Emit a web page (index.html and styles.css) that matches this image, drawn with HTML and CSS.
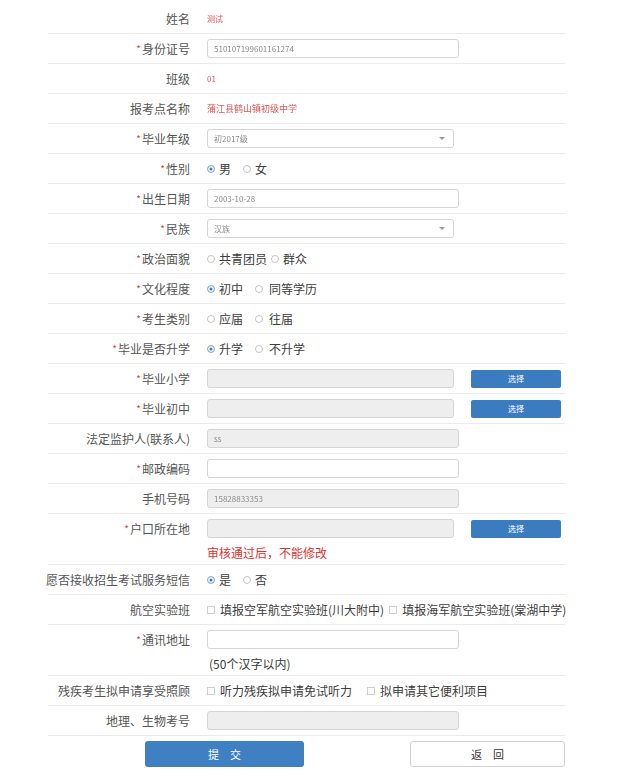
FILE: index.html
```html
<!DOCTYPE html>
<html lang="zh-CN">
<head>
<meta charset="utf-8">
<title>考生信息</title>
<link rel="stylesheet" href="styles.css">
</head>
<body>
<div class="form">
  <div class="row">
    <div class="label">姓名</div>
    <div class="field"><span class="val red blur">测试</span></div>
  </div>
  <div class="row">
    <div class="label"><span class="req">*</span>身份证号</div>
    <div class="field"><div class="input"><span class="blur">510107199601161274</span></div></div>
  </div>
  <div class="row">
    <div class="label">班级</div>
    <div class="field"><span class="val red blur">01</span></div>
  </div>
  <div class="row">
    <div class="label">报考点名称</div>
    <div class="field"><span class="val red blur wide">蒲江县鹤山镇初级中学</span></div>
  </div>
  <div class="row">
    <div class="label"><span class="req">*</span>毕业年级</div>
    <div class="field"><div class="input select"><span class="blur">初2017级</span><span class="caret"></span></div></div>
  </div>
  <div class="row">
    <div class="label"><span class="req">*</span>性别</div>
    <div class="field">
      <span class="opt"><span class="radio on"></span>男</span>
      <span class="opt"><span class="radio"></span>女</span>
    </div>
  </div>
  <div class="row">
    <div class="label"><span class="req">*</span>出生日期</div>
    <div class="field"><div class="input"><span class="blur">2003-10-28</span></div></div>
  </div>
  <div class="row">
    <div class="label"><span class="req">*</span>民族</div>
    <div class="field"><div class="input select"><span class="blur">汉族</span><span class="caret"></span></div></div>
  </div>
  <div class="row">
    <div class="label"><span class="req">*</span>政治面貌</div>
    <div class="field">
      <span class="opt tight"><span class="radio"></span>共青团员</span>
      <span class="opt"><span class="radio"></span>群众</span>
    </div>
  </div>
  <div class="row">
    <div class="label"><span class="req">*</span>文化程度</div>
    <div class="field">
      <span class="opt"><span class="radio on"></span>初中</span>
      <span class="opt"><span class="radio sp"></span>同等学历</span>
    </div>
  </div>
  <div class="row">
    <div class="label"><span class="req">*</span>考生类别</div>
    <div class="field">
      <span class="opt"><span class="radio"></span>应届</span>
      <span class="opt"><span class="radio sp"></span>往届</span>
    </div>
  </div>
  <div class="row">
    <div class="label"><span class="req">*</span>毕业是否升学</div>
    <div class="field">
      <span class="opt"><span class="radio on"></span>升学</span>
      <span class="opt"><span class="radio sp"></span>不升学</span>
    </div>
  </div>
  <div class="row">
    <div class="label"><span class="req">*</span>毕业小学</div>
    <div class="field"><div class="input dis short"></div><button class="btn-select" type="button">选择</button></div>
  </div>
  <div class="row">
    <div class="label"><span class="req">*</span>毕业初中</div>
    <div class="field"><div class="input dis short"></div><button class="btn-select" type="button">选择</button></div>
  </div>
  <div class="row">
    <div class="label">法定监护人(联系人)</div>
    <div class="field"><div class="input dis"><span class="blur">ss</span></div></div>
  </div>
  <div class="row">
    <div class="label"><span class="req">*</span>邮政编码</div>
    <div class="field"><div class="input"></div></div>
  </div>
  <div class="row">
    <div class="label">手机号码</div>
    <div class="field"><div class="input dis"><span class="blur">15828833353</span></div></div>
  </div>
  <div class="row">
    <div class="label"><span class="req">*</span>户口所在地</div>
    <div class="cell">
      <div class="field"><div class="input dis short"></div><button class="btn-select" type="button">选择</button></div>
      <div class="note red-note">审核通过后，不能修改</div>
    </div>
  </div>
  <div class="row">
    <div class="label">愿否接收招生考试服务短信</div>
    <div class="field">
      <span class="opt"><span class="radio on"></span>是</span>
      <span class="opt"><span class="radio"></span>否</span>
    </div>
  </div>
  <div class="row">
    <div class="label">航空实验班</div>
    <div class="field">
      <span class="opt chk-opt"><span class="check"></span>填报空军航空实验班(川大附中)</span>
      <span class="opt chk-opt"><span class="check"></span>填报海军航空实验班(棠湖中学)</span>
    </div>
  </div>
  <div class="row">
    <div class="label"><span class="req">*</span>通讯地址</div>
    <div class="cell">
      <div class="field"><div class="input"></div></div>
      <div class="note hint">(50个汉字以内)</div>
    </div>
  </div>
  <div class="row">
    <div class="label">残疾考生拟申请享受照顾</div>
    <div class="field">
      <span class="opt chk-opt wide-gap"><span class="check"></span>听力残疾拟申请免试听力</span>
      <span class="opt chk-opt"><span class="check"></span>拟申请其它便利项目</span>
    </div>
  </div>
  <div class="row">
    <div class="label">地理、生物考号</div>
    <div class="field"><div class="input dis"></div></div>
  </div>
  <div class="actions">
    <button class="btn submit" type="button">提　交</button>
    <button class="btn back" type="button">返　回</button>
  </div>
</div>
</body>
</html>
```

FILE: styles.css
```css
body {
  margin: 0;
  background: #fff;
  font-family: "Noto Sans CJK SC", "Noto Sans", "Liberation Sans", sans-serif;
}

.form {
  width: 517px;
  margin-left: 48px;
  padding-top: 4px;
}

.row {
  display: grid;
  grid-template-columns: 152px 1fr;
  border-bottom: 1px solid #ebebeb;
}

.label {
  height: 29px;
  display: flex;
  align-items: center;
  justify-content: flex-end;
  padding-right: 10px;
  font-size: 12px;
  color: #555;
  white-space: nowrap;
}

.req {
  color: #e04040;
  font-size: 10px;
  margin-right: 1px;
  align-self: flex-start;
  margin-top: 7px;
}

.field {
  height: 29px;
  display: flex;
  align-items: center;
  padding-left: 7px;
  font-size: 12px;
  color: #3c3c3c;
  white-space: nowrap;
}

.cell {
  display: flex;
  flex-direction: column;
}

.note {
  height: 21px;
  line-height: 19px;
  padding-left: 7px;
  font-size: 12px;
}

.red-note {
  color: #e0332f;
}

.hint {
  color: #3c3c3c;
  padding-left: 9px;
}

.val {
  font-size: 8px;
}

.val.wide {
  font-size: 9px;
}

.red {
  color: #e35252;
}

.blur {
  filter: blur(0.7px);
}

.input {
  box-sizing: border-box;
  width: 252px;
  height: 19px;
  border: 1px solid #d5d5d5;
  border-radius: 3px;
  background: #fff;
  display: flex;
  align-items: center;
  padding-left: 6px;
  font-size: 8px;
  color: #8a8a8a;
}

.input.short,
.input.select {
  width: 247px;
}

.input.dis {
  background: #eeeeee;
}

.select {
  justify-content: space-between;
  padding-right: 8px;
}

.caret {
  width: 0;
  height: 0;
  border-left: 3px solid transparent;
  border-right: 3px solid transparent;
  border-top: 3px solid #999;
}

.btn-select {
  margin-left: 17px;
  width: 90px;
  height: 18px;
  border: none;
  border-radius: 2px;
  background: #3b7cc0;
  color: #fff;
  font-family: inherit;
  font-size: 8px;
  padding: 0;
}

.opt {
  display: inline-flex;
  align-items: center;
  margin-right: 12px;
}

.opt.tight {
  margin-right: 4px;
}

.radio {
  box-sizing: border-box;
  width: 8px;
  height: 8px;
  border: 1px solid #c4c4c4;
  border-radius: 50%;
  margin-right: 4px;
  background: #fff;
}

.radio.on {
  border-color: #9db8d6;
  background: #3b7cc0;
  box-shadow: inset 0 0 0 1.5px #fff;
}

.radio.sp {
  margin-right: 6px;
}

.check {
  box-sizing: border-box;
  width: 8px;
  height: 8px;
  border: 1px solid #cfcfcf;
  margin-right: 5px;
  background: #fff;
}

.chk-opt {
  margin-right: 5px;
}

.chk-opt.wide-gap {
  margin-right: 15px;
}

.actions {
  display: flex;
  gap: 106px;
  padding-left: 97px;
  margin-top: 5px;
}

.btn {
  height: 26px;
  border-radius: 3px;
  font-family: inherit;
  font-size: 11px;
  padding: 0;
}

.submit {
  width: 159px;
  border: none;
  background: #3f80c3;
  color: #fff;
}

.back {
  width: 155px;
  border: 1px solid #d0d0d0;
  background: #fff;
  color: #333;
}
```
